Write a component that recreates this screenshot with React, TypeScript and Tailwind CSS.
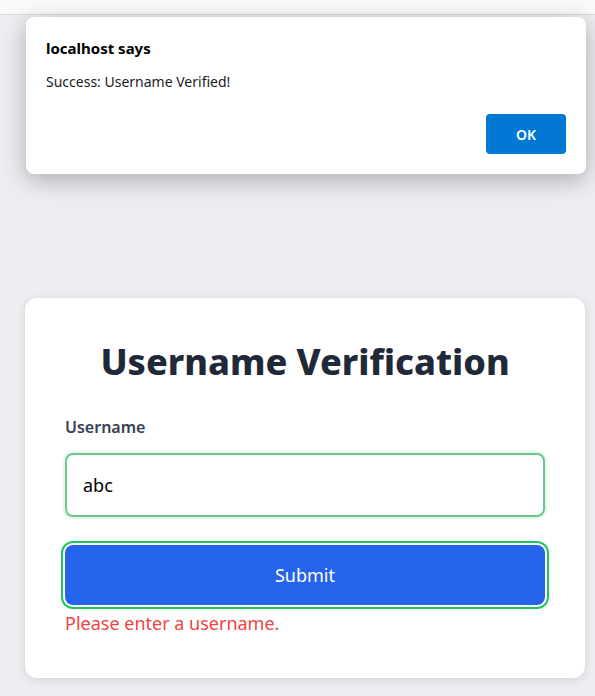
import React, { useState } from 'react';

const font = { fontFamily: '"Noto Sans", "Open Sans", sans-serif' };

const AlertDialog: React.FC<{ message: string }> = ({ message }) => {
  return (
    <div className="absolute left-[26px] top-[17px] w-[560px] h-[157px] bg-white rounded-lg shadow-[0_6px_24px_rgba(0,0,0,0.28)] px-5 pt-[19px] pb-5 flex flex-col">
      <h1 className="text-[15px] font-bold text-black leading-6">localhost says</h1>
      <p className="mt-[12px] text-[14px] text-[#1a1a1a] leading-5">{message}</p>
      <div className="mt-auto flex justify-end">
        <button className="w-20 h-10 rounded bg-[#0078d4] text-white text-[14px] font-semibold">OK</button>
      </div>
    </div>
  );
};

export default function App() {
  const [username, setUsername] = useState('abc');

  return (
    <div className="relative h-[696px] overflow-hidden bg-[#edeef2]" style={font}>
      <div className="h-[15px] bg-[#fafafa] border-b border-[#dadada]" />
      <div className="pt-[283px] pl-[25px]">
        <div className="w-[560px] bg-white rounded-xl shadow-[0_2px_10px_rgba(0,0,0,0.12)] px-10 pt-[44px] pb-[41px]">
          <h2 className="text-[36px] leading-10 font-extrabold text-[#1f2937] text-center">
            Username Verification
          </h2>
          <label className="block mt-[33px] text-base font-semibold text-[#374151] leading-6">Username</label>
          <input
            className="block mt-[14px] w-full h-[64px] px-4 text-lg text-black border-2 border-[#6fc48f] rounded-lg ring-2 ring-[#dcfce7] outline-none"
            value={username}
            onChange={(e) => setUsername(e.target.value)}
          />
          <button className="block mt-7 w-full h-[60px] rounded-lg bg-[#2563eb] text-white text-lg ring-2 ring-[#22c55e] ring-offset-2">
            Submit
          </button>
          <p className="mt-1 text-lg leading-7 text-[#ef4444]">Please enter a username.</p>
        </div>
      </div>
      <AlertDialog message="Success: Username Verified!" />
    </div>
  );
}
